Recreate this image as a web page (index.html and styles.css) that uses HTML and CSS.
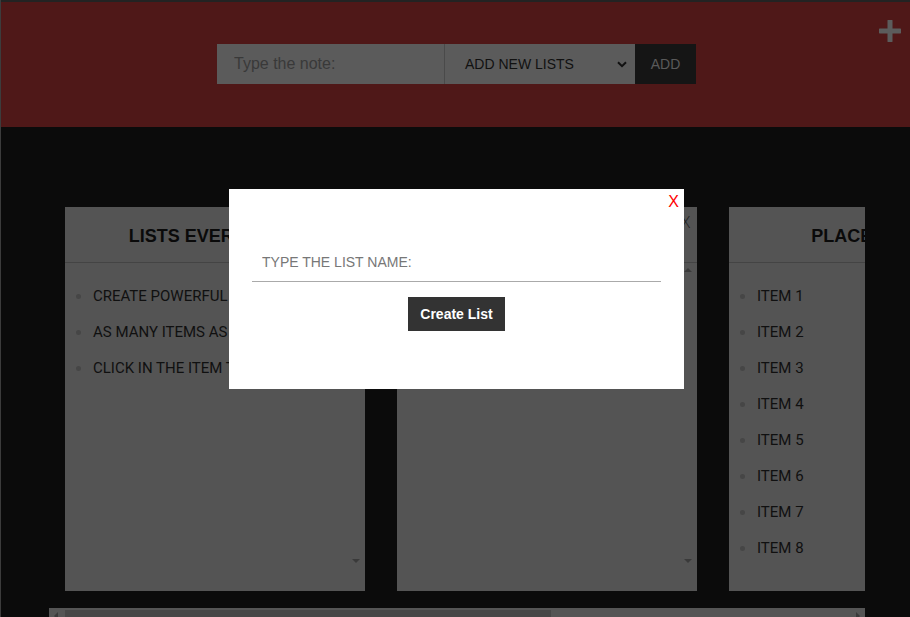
FILE: index.html
```html
<!DOCTYPE html>
<html lang="en">
<head>
<meta charset="utf-8">
<title>Lists</title>
<link rel="stylesheet" href="styles.css">
</head>
<body>
<div class="app">
  <header class="topbar">
    <form class="note-form">
      <input class="note-input" type="text" placeholder="Type the note:">
      <div class="select">
        <span class="select-label">ADD NEW LISTS</span>
        <svg class="chev" width="10" height="7" viewBox="0 0 10 7"><path d="M1 1.2 L5 5.2 L9 1.2" fill="none" stroke="#111" stroke-width="2"/></svg>
      </div>
      <button class="add-btn" type="button">ADD</button>
    </form>
    <svg class="plus" width="22" height="22" viewBox="0 0 22 22"><path d="M11 1 V21 M1 11 H21" stroke="#5c5c5c" stroke-width="5" stroke-linecap="round"/></svg>
  </header>

  <main class="board">
    <div class="scroller">
      <section class="card">
        <div class="card-head"><h2>LISTS EVERYTHING</h2><span class="card-x">X</span></div>
        <div class="card-body">
          <ul>
            <li>CREATE POWERFUL LISTS</li>
            <li>AS MANY ITEMS AS YOU WANT</li>
            <li>CLICK IN THE ITEM TO EDIT</li>
          </ul>
          <span class="arrow up"></span><span class="arrow down"></span>
        </div>
      </section>
      <section class="card">
        <div class="card-head"><h2>SHOPPING</h2><span class="card-x">X</span></div>
        <div class="card-body">
          <ul></ul>
          <span class="arrow up"></span><span class="arrow down"></span>
        </div>
      </section>
      <section class="card">
        <div class="card-head"><h2>PLACES TO GO</h2><span class="card-x">X</span></div>
        <div class="card-body">
          <ul>
            <li>ITEM 1</li>
            <li>ITEM 2</li>
            <li>ITEM 3</li>
            <li>ITEM 4</li>
            <li>ITEM 5</li>
            <li>ITEM 6</li>
            <li>ITEM 7</li>
            <li>ITEM 8</li>
          </ul>
        </div>
      </section>
      <section class="card">
        <div class="card-head"><h2>TO DO</h2><span class="card-x">X</span></div>
        <div class="card-body"><ul></ul></div>
      </section>
    </div>
    <div class="hscroll">
      <span class="hs-arrow left"></span>
      <span class="hs-thumb"></span>
      <span class="hs-arrow right"></span>
    </div>
  </main>

  <div class="modal">
    <span class="modal-x">X</span>
    <input class="modal-input" type="text" placeholder="TYPE THE LIST NAME:">
    <button class="create-btn" type="button">Create List</button>
  </div>
</div>
</body>
</html>
```

FILE: styles.css
```css
* { box-sizing: border-box; }
html, body { margin: 0; padding: 0; }
body {
  background: #0b0b0b;
  font-family: "Liberation Sans", Arial, sans-serif;
  overflow: hidden;
}
.app {
  position: relative;
  width: 910px;
  height: 617px;
  border-left: 1px solid #3c3c3c;
  overflow: hidden;
}
.topbar {
  position: relative;
  height: 127px;
  border-top: 2px solid #232323;
  background: #4f1818;
  display: flex;
  justify-content: center;
  padding-top: 42px;
}
.note-form {
  display: flex;
  height: 40px;
  margin-left: 2px;
}
.note-input {
  width: 227px;
  height: 40px;
  border: 0;
  outline: 0;
  background: #5b5b5b;
  padding: 0 0 0 17px;
  font-family: "Liberation Sans", Arial, sans-serif;
  font-size: 16px;
  color: #111;
}
.note-input::placeholder { color: #393939; }
.select {
  width: 191px;
  height: 40px;
  background: #5b5b5b;
  border-left: 1px solid #4a4a4a;
  display: flex;
  align-items: center;
  padding: 0 8px 0 20px;
  font-size: 14px;
  color: #111;
}
.select-label { flex: 1; }
.chev { display: block; }
.add-btn {
  width: 61px;
  height: 40px;
  border: 0;
  background: #151515;
  color: #5a5a5a;
  font-family: "Liberation Sans", Arial, sans-serif;
  font-size: 14px;
  padding: 0;
}
.plus {
  position: absolute;
  right: 9px;
  top: 18px;
}

.board {
  padding: 64px 45px 0 48px;
}
.scroller {
  display: flex;
  gap: 32px;
  padding: 16px;
  overflow: hidden;
}
.card {
  flex: 0 0 300px;
  height: 384px;
  background: #545454;
  display: flex;
  flex-direction: column;
}
.card-head {
  position: relative;
  height: 56px;
  border-bottom: 1px solid #444444;
  display: flex;
  align-items: center;
  justify-content: center;
}
.card-head h2 {
  margin: 0;
  font-family: "Liberation Sans", Arial, sans-serif;
  font-weight: bold;
  font-size: 18px;
  color: #0a0a0a;
  padding-top: 3px;
}
.card-x {
  position: absolute;
  right: 6px;
  top: 6px;
  font-family: "DejaVu Sans", sans-serif;
  font-weight: 200;
  font-size: 16px;
  color: #1c1c1c;
}
.card-body {
  position: relative;
  flex: 1;
}
.card-body ul {
  margin: 0;
  padding: 15px 0 0 28px;
  list-style: none;
}
.card-body li {
  position: relative;
  height: 36px;
  font-family: Roboto, "Liberation Sans", sans-serif;
  font-size: 15px;
  line-height: 36px;
  color: #101010;
  white-space: nowrap;
}
.card-body li::before {
  content: "";
  position: absolute;
  left: -17px;
  top: 16px;
  width: 5px;
  height: 5px;
  border-radius: 50%;
  background: #464646;
}
.arrow {
  position: absolute;
  right: 5px;
  width: 0;
  height: 0;
  border-left: 4px solid transparent;
  border-right: 4px solid transparent;
}
.arrow.up { top: 5px; border-bottom: 4px solid #3a3a3a; }
.arrow.down { bottom: 28px; border-top: 4px solid #3a3a3a; }

.hscroll {
  display: flex;
  align-items: center;
  height: 17px;
  margin-top: 1px;
  background: #555555;
}
.hs-arrow {
  flex: 0 0 16px;
  height: 17px;
  position: relative;
}
.hs-arrow::after {
  content: "";
  position: absolute;
  top: 4px;
  border-top: 4px solid transparent;
  border-bottom: 4px solid transparent;
}
.hs-arrow.left::after { left: 5px; border-right: 4px solid #3a3a3a; }
.hs-arrow.right::after { right: 5px; border-left: 4px solid #3a3a3a; }
.hs-thumb {
  width: 486px;
  height: 13px;
  background: #474747;
}
.hs-arrow.right { margin-left: auto; }

.modal {
  position: absolute;
  left: 228px;
  top: 189px;
  width: 455px;
  height: 200px;
  background: #ffffff;
  padding: 53px 23px 0 23px;
  display: flex;
  flex-direction: column;
  align-items: center;
}
.modal-x {
  position: absolute;
  right: 5px;
  top: 4px;
  font-family: "Liberation Sans", Arial, sans-serif;
  font-size: 16px;
  color: #ff0000;
}
.modal-input {
  width: 100%;
  height: 40px;
  border: 0;
  border-bottom: 1px solid #aaaaaa;
  outline: 0;
  padding: 1px 0 0 10px;
  font-family: "Liberation Sans", Arial, sans-serif;
  font-size: 14px;
  color: #222;
}
.modal-input::placeholder { color: #777777; }
.create-btn {
  margin-top: 15px;
  width: 97px;
  height: 34px;
  border: 0;
  background: #333333;
  color: #ffffff;
  font-family: "Liberation Sans", Arial, sans-serif;
  font-weight: bold;
  font-size: 14px;
  padding: 0;
}
```
